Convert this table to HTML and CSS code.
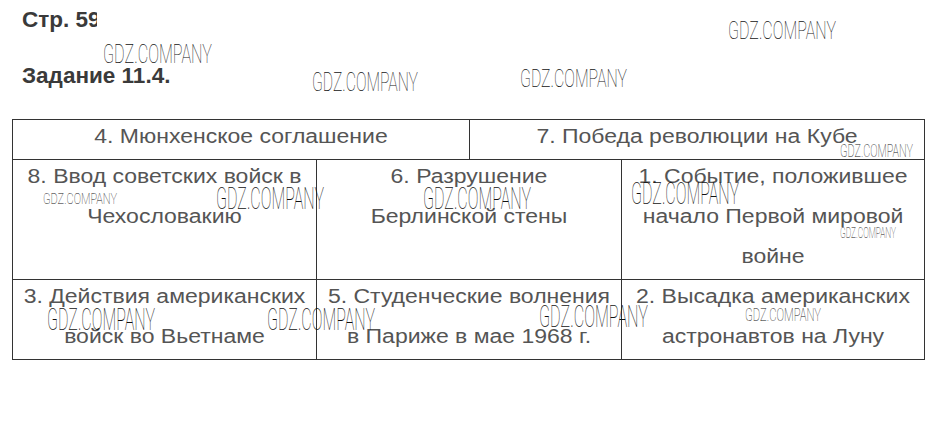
FILE: index.html
```html
<!DOCTYPE html>
<html lang="ru">
<head>
<meta charset="utf-8">
<link rel="stylesheet" href="styles.css">
</head>
<body>
<div class="page">
  <div class="heading"><span class="clip">Стр. 59</span></div>
  <div class="task">Задание 11.4.</div>

  <div class="grid">
    <div class="row row1">
      <div class="cell"><p>4. Мюнхенское соглашение</p></div>
      <div class="cell"><p>7. Победа революции на Кубе</p></div>
    </div>
    <div class="row row2">
      <div class="cell"><p>8. Ввод советских войск в<br>Чехословакию</p></div>
      <div class="cell"><p>6. Разрушение<br>Берлинской стены</p></div>
      <div class="cell"><p>1. Событие, положившее<br>начало Первой мировой<br>войне</p></div>
    </div>
    <div class="row row3">
      <div class="cell"><p>3. Действия американских<br>войск во Вьетнаме</p></div>
      <div class="cell"><p>5. Студенческие волнения<br>в Париже в мае 1968 г.</p></div>
      <div class="cell"><p>2. Высадка американских<br>астронавтов на Луну</p></div>
    </div>
  </div>

  <svg class="wm" style="left:103px;top:45px" width="109" height="18"><text x="0" y="18" font-size="25" textLength="109" lengthAdjust="spacingAndGlyphs">GDZ.COMPANY</text></svg>
  <svg class="wm" style="left:312px;top:73px" width="106" height="18"><text x="0" y="18" font-size="25" textLength="106" lengthAdjust="spacingAndGlyphs">GDZ.COMPANY</text></svg>
  <svg class="wm" style="left:728px;top:20px" width="108" height="19"><text x="0" y="19" font-size="26.5" textLength="108" lengthAdjust="spacingAndGlyphs">GDZ.COMPANY</text></svg>
  <svg class="wm" style="left:520px;top:68px" width="107" height="19"><text x="0" y="19" font-size="26.5" textLength="107" lengthAdjust="spacingAndGlyphs">GDZ.COMPANY</text></svg>
  <svg class="wm" style="left:840px;top:144px" width="73" height="13"><text x="0" y="13" font-size="18" textLength="73" lengthAdjust="spacingAndGlyphs">GDZ.COMPANY</text></svg>
  <svg class="wm" style="left:43px;top:193px" width="74" height="11"><text x="0" y="11" font-size="15.5" textLength="74" lengthAdjust="spacingAndGlyphs">GDZ.COMPANY</text></svg>
  <svg class="wm" style="left:216px;top:187px" width="108" height="22"><text x="0" y="22" font-size="31" textLength="108" lengthAdjust="spacingAndGlyphs">GDZ.COMPANY</text></svg>
  <svg class="wm" style="left:423px;top:187px" width="108" height="22"><text x="0" y="22" font-size="31" textLength="108" lengthAdjust="spacingAndGlyphs">GDZ.COMPANY</text></svg>
  <svg class="wm" style="left:631px;top:182px" width="108" height="22"><text x="0" y="22" font-size="31" textLength="108" lengthAdjust="spacingAndGlyphs">GDZ.COMPANY</text></svg>
  <svg class="wm" style="left:840px;top:228px" width="56" height="10"><text x="0" y="10" font-size="14" textLength="56" lengthAdjust="spacingAndGlyphs">GDZ.COMPANY</text></svg>
  <svg class="wm" style="left:47px;top:307px" width="108" height="23"><text x="0" y="23" font-size="32" textLength="108" lengthAdjust="spacingAndGlyphs">GDZ.COMPANY</text></svg>
  <svg class="wm" style="left:267px;top:307px" width="108" height="23"><text x="0" y="23" font-size="32" textLength="108" lengthAdjust="spacingAndGlyphs">GDZ.COMPANY</text></svg>
  <svg class="wm" style="left:539px;top:304px" width="109" height="23"><text x="0" y="23" font-size="32" textLength="109" lengthAdjust="spacingAndGlyphs">GDZ.COMPANY</text></svg>
  <svg class="wm" style="left:745px;top:308px" width="76" height="13"><text x="0" y="13" font-size="18" textLength="76" lengthAdjust="spacingAndGlyphs">GDZ.COMPANY</text></svg>
</div>
</body>
</html>
```

FILE: styles.css
```css
html, body {
  margin: 0;
  padding: 0;
  background: #fff;
}
.page {
  position: relative;
  width: 937px;
  height: 432px;
  overflow: hidden;
  font-family: "Liberation Sans", Arial, sans-serif;
}
.heading {
  padding: 8px 0 0 22px;
  height: 26px;
  font-weight: bold;
  font-size: 22.5px;
  line-height: 24px;
  color: #3a3a3a;
}
.clip {
  display: inline-block;
  width: 75px;
  overflow: hidden;
  white-space: nowrap;
  vertical-align: top;
}
.task {
  padding: 30px 0 0 22px;
  font-weight: bold;
  font-size: 22.5px;
  line-height: 24px;
  color: #3a3a3a;
}
.grid {
  margin: 31px 0 0 12px;
  width: 913px;
  border: 1px solid #333;
  box-sizing: border-box;
}
.row {
  display: grid;
  border-top: 1px solid #333;
}
.row1 {
  border-top: 0;
  grid-template-columns: 456px 1fr;
  height: 39px;
}
.row2 {
  grid-template-columns: 303px 305px 1fr;
  height: 119px;
}
.row3 {
  grid-template-columns: 303px 305px 1fr;
  height: 79px;
}
.cell {
  border-left: 1px solid #333;
  text-align: center;
  color: #555;
  font-size: 20px;
  line-height: 40px;
}
.cell:first-child {
  border-left: 0;
}
.cell p {
  margin: -4px 0 0;
  white-space: nowrap;
  transform: scaleX(1.15);
}
.wm {
  position: absolute;
  overflow: visible;
}
.wm text {
  font-family: Roboto, "Liberation Sans", sans-serif;
  font-weight: 100;
  fill: #111;
}
```
